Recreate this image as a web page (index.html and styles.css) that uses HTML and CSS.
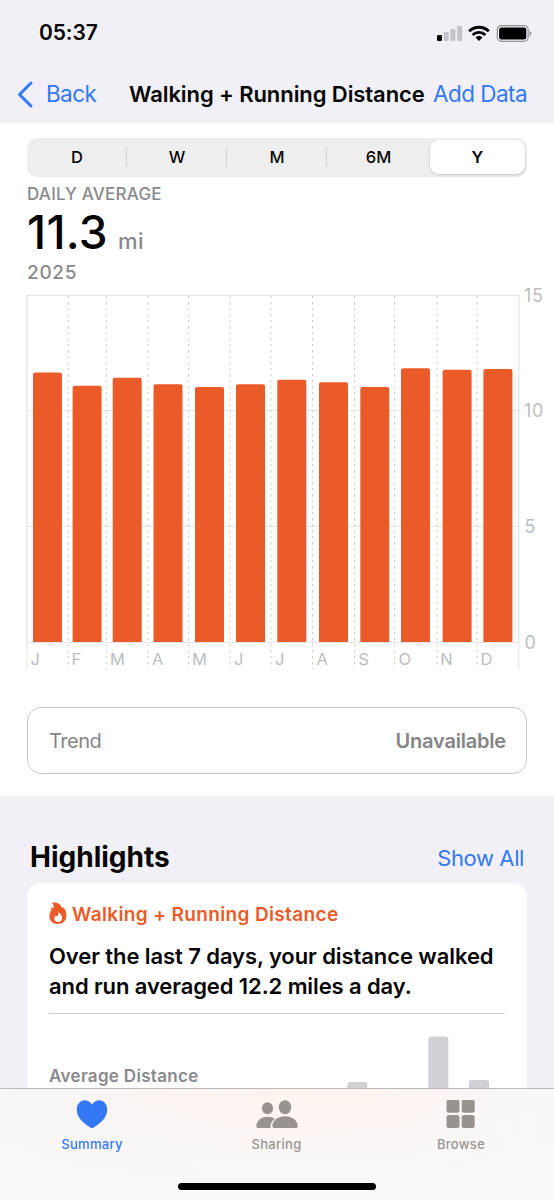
FILE: index.html
```html
<!DOCTYPE html>
<html lang="en">
<head>
<meta charset="utf-8">
<title>Walking + Running Distance</title>
<link rel="stylesheet" href="styles.css">
</head>
<body>
<div class="screen">
  <header class="header">
    <div class="status">
      <span class="clock">05:37</span>
      <svg class="status-icons" width="96" height="18" viewBox="0 0 96 18">
        <rect x="0" y="10" width="5" height="6" rx="1.3" fill="#000"/>
        <g fill="#c4c3c8"><rect x="6.7" y="7" width="5" height="9" rx="1.3"/><rect x="13.4" y="4" width="5" height="12" rx="1.3"/><rect x="20.2" y="0.7" width="5" height="15.3" rx="1.3"/></g>
        <g fill="none" stroke="#000" stroke-width="2.9"><path d="M32.2 6.2a14 14 0 0 1 19.6 0"/><path d="M35.6 10a9.2 9.2 0 0 1 12.8 0"/></g>
        <path d="M38.5 12.4a5.2 5.2 0 0 1 7 0L42 16z" fill="#000"/>
        <rect x="60.2" y="0.7" width="31" height="15.6" rx="4.4" fill="none" stroke="#929195" stroke-width="1.2"/>
        <rect x="62.1" y="2.6" width="27.2" height="11.8" rx="2.5" fill="#000"/>
        <path d="M92.6 6.1c2.5.7 2.5 4.2 0 4.9z" fill="#929195"/>
      </svg>
    </div>
    <nav class="nav">
      <svg class="chevron" width="18" height="28" viewBox="0 0 18 28"><path d="M16 3 4.500 14.500 16 26" fill="none" stroke="#3478f6" stroke-width="3" stroke-linecap="round" stroke-linejoin="round"/></svg>
      <span class="back">Back</span>
      <h1 class="title">Walking + Running Distance</h1>
      <span class="add">Add Data</span>
    </nav>
  </header>

  <main class="panel">
    <div class="segments">
      <span class="segment">D</span><span class="segment">W</span><span class="segment">M</span><span class="segment last">6M</span><span class="segment active">Y</span>
    </div>
    <div class="summary">
      <div class="caption">DAILY AVERAGE</div>
      <div class="value"><span class="number">11.3</span><span class="unit">mi</span></div>
      <div class="year">2025</div>
    </div>
    <svg class="chart" width="554" height="390" viewBox="0 285 554 390">
      <g class="grid">
        <path d="M26.5 295.5H519M26.5 410.5H519M26.5 526.5H519M26.5 642.5H519"/>
        <path class="edge" d="M26.8 295V642M518.8 295V642"/>
        <path d="M27 642V669M518.8 642V669"/>
        <path class="dash" d="M68.3 296V669M106.3 296V669M148 296V669M188.6 296V669M230 296V669M271 296V669M312.5 296V669M354.5 296V669M394.6 296V669M437 296V669M477 296V669"/>
      </g>
      <g class="bars">
        <path d="M33 642V374.4q0-2 2-2h25q2 0 2 2V642z"/>
        <path d="M72.6 642V387.7q0-2 2-2h25q2 0 2 2V642z"/>
        <path d="M112.7 642V379.7q0-2 2-2h25q2 0 2 2V642z"/>
        <path d="M153.5 642V386.2q0-2 2-2h25q2 0 2 2V642z"/>
        <path d="M195 642V389q0-2 2-2h25q2 0 2 2V642z"/>
        <path d="M236 642V386.2q0-2 2-2h25q2 0 2 2V642z"/>
        <path d="M277.3 642V381.8q0-2 2-2h25q2 0 2 2V642z"/>
        <path d="M319 642V384.3q0-2 2-2h25q2 0 2 2V642z"/>
        <path d="M360.3 642V389q0-2 2-2h25q2 0 2 2V642z"/>
        <path d="M401 642V370.2q0-2 2-2h25q2 0 2 2V642z"/>
        <path d="M442.6 642V371.7q0-2 2-2h25q2 0 2 2V642z"/>
        <path d="M483.4 642V371q0-2 2-2h25q2 0 2 2V642z"/>
      </g>
      <g class="months">
        <text x="30.5" y="665.2">J</text><text x="71.5" y="665.2">F</text><text x="110" y="665.2">M</text><text x="152" y="665.2">A</text><text x="192" y="665.2">M</text><text x="234" y="665.2">J</text><text x="275" y="665.2">J</text><text x="316.5" y="665.2">A</text><text x="358.3" y="665.2">S</text><text x="398.5" y="665.2">O</text><text x="440.3" y="665.2">N</text><text x="480.5" y="665.2">D</text>
      </g>
      <g class="ticks">
        <text x="524" y="302.4">15</text><text x="524" y="417.400">10</text><text x="524.5" y="533.400">5</text><text x="524.5" y="649.400">0</text>
      </g>
    </svg>
    <div class="trend"><span>Trend</span><strong>Unavailable</strong></div>
  </main>

  <section class="highlights">
    <div class="heading"><h2>Highlights</h2><span class="show-all">Show All</span></div>
    <article class="card">
      <div class="card-title">
        <svg width="18" height="23" viewBox="0 0 18 23"><path fill="#eb5a29" fill-rule="evenodd" d="M2.7.8C7.7-.4 12.2 2 13.1 6.3c.5-.3.8-.8.9-1.3 2.4 2.2 3.6 5.2 3.4 8.8-.2 5.1-3.6 8.200-8.600 8.200C3.600 22 .4 18.900.4 14.300c0-3 1.100-4.700 2.100-6.600L1.600 5.400c1.100.1 2 .4 2.800 1C5 4.300 4.500 2.300 2.700.8zM9.200 10.200c.6 2.300-.2 3.200-.9 4.200l-1.500-1c-.7.8-1.500 1.900-1.500 3.200 0 2.100 1.600 3.400 3.800 3.400s3.900-1.400 3.900-3.700c0-2.800-1.500-5.100-3.800-6.100z"/></svg>
        <span>Walking + Running Distance</span>
      </div>
      <p class="message"><span class="line-one">Over the last 7 days, your distance walked</span><br><span class="line-two">and run averaged 12.2 miles a day.</span></p>
      <div class="preview">
        <span class="average">Average Distance</span>
        <svg class="mini" width="160" height="56" viewBox="0 0 160 56"><g fill="#d1d0d5"><rect x="2.300" y="50" width="20" height="20" rx="3"/><rect x="83.300" y="4.500" width="20" height="60" rx="3"/><rect x="124" y="48" width="20" height="20" rx="3"/></g></svg>
      </div>
    </article>
  </section>

  <footer class="tabs">
    <div class="tab selected">
      <svg width="44" height="30" viewBox="0 0 44 30"><path fill="#3478f6" d="M22 28.200c-.6 0-1.200-.4-1.700-.7C12 22.300 6.800 16.500 6.800 9.700 6.800 4.200 10.100.3 14.700.3c3.100 0 5.700 1.700 7.300 4.200C23.600 2 26.200.3 29.300.3c4.600 0 7.900 3.900 7.900 9.400 0 6.800-5.200 12.600-13.500 17.800-.5.3-1.100.7-1.700.7z"/></svg>
      <span>Summary</span>
    </div>
    <div class="tab sharing">
      <svg width="44" height="30" viewBox="0 0 44 30"><g fill="#999390"><ellipse cx="12.500" cy="8.300" rx="5.600" ry="6"/><path d="M1.300 26c0-5 5-9.300 11.200-9.300 3 0 5.400.7 7.300 2-2.700 2-4.300 4.800-4.300 7.500 0 .8.1 1.300.4 1.800H3c-1 0-1.700-.9-1.700-2z"/><ellipse cx="30" cy="7.200" rx="6.200" ry="7"/><path d="M17.400 26c0-5.300 5.500-9.700 12.600-9.700S42.700 20.700 42.700 26c0 1.400-.8 2-2.300 2H19.700c-1.500 0-2.300-.6-2.300-2z"/></g></svg>
      <span>Sharing</span>
    </div>
    <div class="tab browse">
      <svg width="44" height="30" viewBox="0 0 44 30"><g fill="#999390"><rect x="7.500" y="-.3" width="13" height="13" rx="2.500"/><rect x="22.700" y="-.3" width="13" height="13" rx="2.500"/><rect x="7.500" y="15" width="13" height="13" rx="2.500"/><rect x="22.700" y="15" width="13" height="13" rx="2.500"/></g></svg>
      <span>Browse</span>
    </div>
    <div class="home"></div>
  </footer>
</div>
</body>
</html>
```
FILE: styles.css
```css
* { box-sizing: border-box; }
body { margin: 0; background: #f1f0f6; font-family: Inter, "Liberation Sans", sans-serif; color: #050505; }
.screen { width: 554px; height: 1200px; display: flex; flex-direction: column; overflow: hidden; }

.header { height: 123px; flex: none; background: #f1f0f6; }
.status { height: 66px; display: flex; justify-content: space-between; padding: 0 21px 0 39px; }
.clock { font-size: 21px; font-weight: 600; line-height: 66px; letter-spacing: -0.1px; }
.status-icons { margin-top: 25px; }
.nav { height: 55px; display: flex; align-items: center; line-height: 54px; font-size: 22px; color: #3478f6; white-space: nowrap; }
.chevron { margin: 0 11px 0 15px; }
.back { width: 83px; font-size: 22.5px; letter-spacing: -0.6px; padding-left: 2px; }
.title { width: 306px; margin: 0; color: #050505; font-size: 22px; font-weight: 600; letter-spacing: -0.08px; padding-left: 2px; }
.add { font-size: 22.5px; letter-spacing: -0.55px; }

.panel { height: 673px; flex: none; background: #fff; padding-top: 15px; }
.segments { height: 39px; margin: 0 27px; background: #eee; border-radius: 10px; display: grid; grid-template-columns: 100px 100px 100px 103px 1fr; padding: 2px 2px 3px 0; }
.segment { display: flex; align-items: center; justify-content: center; font-size: 16.500px; font-weight: 500; background: linear-gradient(#d4d4d6, #d4d4d6) right center / 1px 20px no-repeat; }
.segment.last { background: none; }
.segment.active { background: #fff; border-radius: 9px; font-weight: 600; box-shadow: 0 1px 3px rgba(0, 0, 0, .18); }
.summary { height: 108px; padding-left: 27px; color: #89898d; white-space: nowrap; }
.caption { height: 34px; line-height: 35px; font-size: 17px; font-weight: 500; letter-spacing: 0.22px; }
.value { height: 46px; display: flex; align-items: baseline; line-height: 42px; }
.number { color: #000; font-size: 46px; font-weight: 500; letter-spacing: 0.3px; width: 91px; }
.unit { font-size: 22px; font-weight: 500; letter-spacing: 0.5px; }
.year { line-height: 31px; font-size: 19px; font-weight: 500; letter-spacing: 0.7px; }
.chart { display: block; }
.grid path { fill: none; stroke: #e5e5e7; stroke-width: 1; }
.grid .edge { stroke: #dededf; }
.grid .dash { stroke: #ceced2; stroke-dasharray: 2.500 3.500; }
.bars { fill: #eb5a29; }
.months text { fill: #bdbdc1; font-size: 16.500px; }
.ticks text { fill: #bdbdc1; font-size: 18px; letter-spacing: 0.8px; }
.trend { margin: 32px 27px 0; height: 67px; border: 1.500px solid #c8c8cb; border-radius: 14px; padding: 0 20px 0 21px; display: flex; align-items: center; justify-content: space-between; color: #858588; font-size: 20px; letter-spacing: -0.5px; }
.trend strong { font-weight: 600; letter-spacing: -0.2px; }

.highlights { flex: none; height: 292px; padding: 40px 27px 0; overflow: hidden; }
.heading { height: 47px; display: flex; justify-content: space-between; padding: 0 3px; white-space: nowrap; }
.heading h2 { margin: 0; font-size: 28px; line-height: 42px; font-weight: 700; letter-spacing: 0; }
.show-all { font-size: 22px; line-height: 45px; letter-spacing: -0.4px; color: #3478f6; }
.card { height: 330px; background: #fff; border-radius: 14px; padding: 19px 22px 0; }
.card-title { height: 26px; display: flex; gap: 5px; color: #eb5a29; font-size: 19px; line-height: 26px; font-weight: 600; letter-spacing: 0.36px; white-space: nowrap; }
.card-title svg { margin-top: 0; }
.message { margin: 14px 0 0; height: 72px; border-bottom: 1.500px solid #cecece; font-size: 22px; line-height: 29.500px; font-weight: 600; letter-spacing: -0.08px; white-space: nowrap; }
.line-two { letter-spacing: -0.1px; }
.preview { display: flex; justify-content: space-between; padding-top: 18px; }
.average { padding-top: 31px; line-height: 26px; font-size: 17px; font-weight: 600; letter-spacing: 0.32px; color: #89898d; }

.tabs { flex: none; height: 112px; border-top: 1px solid #b9b8bb; background: linear-gradient(rgba(249, 249, 251, 0), #f9f9fb 90%), linear-gradient(90deg, #f8f8f9, #f9f4f2 20%, #fef3ef 50%, #fdf4f0 72%, #f8f8fb); display: grid; grid-template-columns: 184px 185px 185px; grid-template-rows: 97px 6px; }
.tab { display: flex; flex-direction: column; align-items: center; padding-top: 11px; color: #99948f; font-size: 13px; font-weight: 500; letter-spacing: 0.3px; }
.tab span { line-height: 20px; margin-top: 4px; }
.tab.selected { color: #3478f6; }
.browse { padding-right: 1px; }
.home { grid-column: 1 / -1; justify-self: center; width: 198px; height: 7px; margin-top: -3px; border-radius: 4px; background: #000; }
```
